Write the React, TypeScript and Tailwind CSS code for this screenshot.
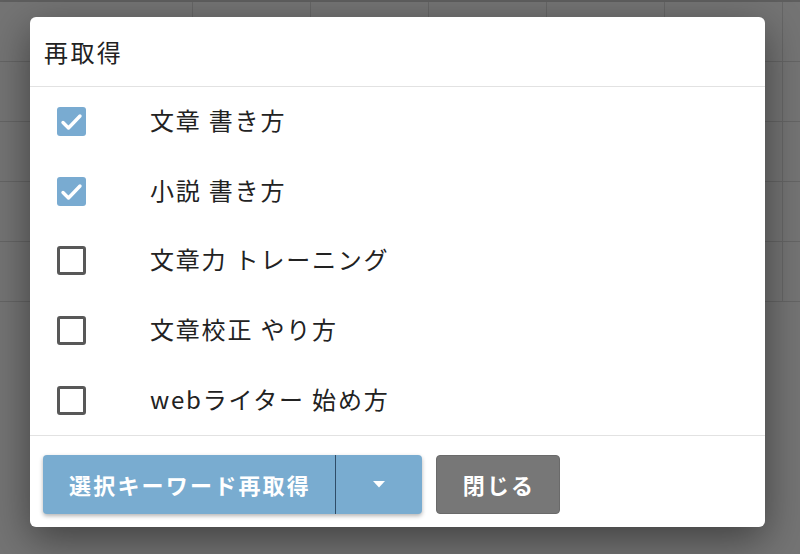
import React from "react";

const items = [
  { label: "文章 書き方", checked: true },
  { label: "小説 書き方", checked: true },
  { label: "文章力 トレーニング", checked: false },
  { label: "文章校正 やり方", checked: false },
  { label: "webライター 始め方", checked: false },
];

const font = { fontFamily: '"Noto Sans CJK JP", "Noto Sans", sans-serif' };

function Checkbox({ checked }: { checked: boolean }) {
  if (checked) {
    return (
      <div className="w-[29px] h-[29px] rounded-[3px] bg-[#79abd1]">
        <svg width="29" height="29" viewBox="0 0 29 29" fill="none">
          <polyline points="6,15.5 11.5,21 23,9" stroke="white" strokeWidth="3.4" strokeLinecap="round" strokeLinejoin="round" />
        </svg>
      </div>
    );
  }
  return <div className="w-[29px] h-[29px] rounded-[3px] border-[3px] border-[#585858] bg-white" />;
}

export default function App() {
  const rows = [0, 1, 2, 3, 4];
  const cols = [0, 1, 2, 3, 4, 5, 6];
  return (
    <div className="relative w-[800px] h-[554px] overflow-hidden bg-[#747474]" style={font}>
      {/* background table seen through the overlay */}
      <div className="flex flex-col border-t-[2px] border-[#5e5e5e]">
        {rows.map((r) => (
          <div key={r} className="flex h-[60px] border-b border-[#656565]">
            {cols.map((c) => (
              <div
                key={c}
                className={
                  c === 0
                    ? "w-[193px] shrink-0 border-r border-[#666666]"
                    : "w-[118px] shrink-0 border-r border-[#666666]"
                }
              />
            ))}
          </div>
        ))}
      </div>

      {/* modal */}
      <div className="absolute inset-0 pt-[17px] pl-[30px]">
        <div className="w-[735px] h-[510px] bg-white rounded-[6px] shadow-[0_12px_40px_rgba(0,0,0,0.45)] flex flex-col overflow-hidden">
          <div className="h-[69px] shrink-0 flex items-center px-[14px] text-[24px] tracking-[0.1em] text-[#222]">
            再取得
          </div>
          <div className="h-px bg-[#e2e2e2] shrink-0" />
          <div className="flex flex-col h-[348px] shrink-0">
            {items.map((it) => (
              <div key={it.label} className="flex-1 flex items-center pl-[26.5px]">
                <Checkbox checked={it.checked} />
                <span className="ml-[64.5px] text-[24px] tracking-[0.075em] text-[#222] leading-none mb-[3px]">{it.label}</span>
              </div>
            ))}
          </div>
          <div className="h-px bg-[#e2e2e2] shrink-0" />
          <div className="flex items-start gap-[14px] pl-[13px] pt-[19px]">
            <div className="flex h-[59px] rounded-[4px] bg-[#79acd0] shadow-[0_2px_4px_rgba(0,0,0,0.3)] overflow-hidden">
              <div className="w-[292px] flex items-center justify-center text-white font-bold text-[22px] tracking-[0.1em] pl-[2px]">
                選択キーワード再取得
              </div>
              <div className="w-px bg-[#2f4d68]" />
              <div className="w-[86px] flex items-center justify-center">
                <svg width="12" height="7" viewBox="0 0 12 7">
                  <polygon points="0,0 12,0 6,6.5" fill="white" />
                </svg>
              </div>
            </div>
            <div className="w-[124px] h-[59px] rounded-[4px] bg-[#777777] border border-[#6a6a6a] flex items-center justify-center text-white font-bold text-[22px] tracking-[0.1em] pl-[2px]">
              閉じる
            </div>
          </div>
        </div>
      </div>
    </div>
  );
}
